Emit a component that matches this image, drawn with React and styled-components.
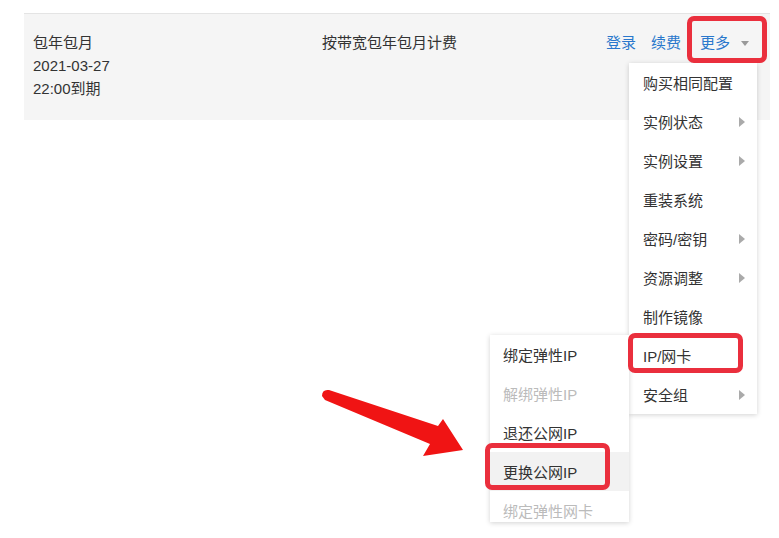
import React from "react";
import styled, { createGlobalStyle } from "styled-components";

const GlobalStyle = createGlobalStyle`
  body {
    margin: 0;
    background: #ffffff;
    font-family: "Liberation Sans", "Noto Sans CJK SC", sans-serif;
    font-size: 15px;
    color: #333333;
  }
`;

const Page = styled.div`
  position: relative;
  width: 779px;
  height: 538px;
  overflow: hidden;
  padding-top: 13px;
  box-sizing: border-box;
`;

const Row = styled.div`
  margin-left: 24px;
  width: 746px;
  height: 107px;
  box-sizing: border-box;
  background: #f5f5f5;
  border-top: 1px solid #e4e4e4;
  display: grid;
  grid-template-columns: 289px 1fr auto;
  align-items: start;
  padding: 17px 21px 0 9px;
  line-height: 23px;
`;

const Cell = styled.div`
  display: flex;
  flex-direction: column;
`;

const Actions = styled.div`
  display: flex;
  align-items: center;
  gap: 15px;
`;

const Link = styled.span`
  color: #2a78cc;
  cursor: pointer;
`;

const More = styled.span`
  display: flex;
  align-items: center;
  gap: 11px;
  margin-left: 4px;
  color: #2a78cc;
`;

const Caret = styled.span`
  width: 0;
  height: 0;
  border-left: 4px solid transparent;
  border-right: 4px solid transparent;
  border-top: 5px solid #999999;
  margin-top: 2px;
`;

const Menu = styled.ul`
  position: absolute;
  list-style: none;
  margin: 0;
  padding: 0;
  background: #ffffff;
  box-shadow: 0 1px 5px rgba(0, 0, 0, 0.18);
  top: ${(p) => p.$top}px;
  left: ${(p) => p.$left}px;
  width: ${(p) => p.$width}px;
  ${(p) => (p.$height ? `height: ${p.$height}px; overflow: hidden;` : "")}
`;

const Item = styled.li`
  position: relative;
  height: 39px;
  display: flex;
  align-items: center;
  justify-content: space-between;
  padding: 0 12px 0 ${(p) => p.$pad || 14}px;
  color: ${(p) => (p.$disabled ? "#bbbbbb" : "#333333")};
  background: ${(p) => (p.$hover ? "#f2f2f2" : "transparent")};
  white-space: nowrap;
`;

const SideArrow = styled.span`
  width: 0;
  height: 0;
  border-top: 5px solid transparent;
  border-bottom: 5px solid transparent;
  border-left: 6px solid #aaaaaa;
`;

const Highlight = styled.div`
  position: absolute;
  box-sizing: border-box;
  border: 5px solid #ea2f3d;
  border-radius: 7px;
  pointer-events: none;
  top: ${(p) => p.$top}px;
  left: ${(p) => p.$left}px;
  width: ${(p) => p.$w}px;
  height: ${(p) => p.$h}px;
`;

const ArrowSvg = styled.svg`
  position: absolute;
  left: 0;
  top: 0;
  pointer-events: none;
`;

const mainItems = [
  { label: "购买相同配置" },
  { label: "实例状态", sub: true },
  { label: "实例设置", sub: true },
  { label: "重装系统" },
  { label: "密码/密钥", sub: true },
  { label: "资源调整", sub: true },
  { label: "制作镜像" },
  { label: "IP/网卡" },
  { label: "安全组", sub: true },
];

const ipItems = [
  { label: "绑定弹性IP" },
  { label: "解绑弹性IP", disabled: true },
  { label: "退还公网IP" },
  { label: "更换公网IP", hover: true },
  { label: "绑定弹性网卡", disabled: true },
];

export default function App() {
  return (
    <>
      <GlobalStyle />
      <Page>
        <Row>
          <Cell>
            <span>包年包月</span>
            <span>2021-03-27</span>
            <span>22:00到期</span>
          </Cell>
          <Cell>
            <span>按带宽包年包月计费</span>
          </Cell>
          <Actions>
            <Link>登录</Link>
            <Link>续费</Link>
            <More>
              更多
              <Caret />
            </More>
          </Actions>
        </Row>

        <Menu $top={63} $left={629} $width={128}>
          {mainItems.map((it) => (
            <Item key={it.label}>
              {it.label}
              {it.sub && <SideArrow />}
            </Item>
          ))}
        </Menu>

        <Menu $top={335} $left={490} $width={139} $height={187}>
          {ipItems.map((it) => (
            <Item
              key={it.label}
              $pad={13}
              $disabled={it.disabled}
              $hover={it.hover}
            >
              {it.label}
            </Item>
          ))}
        </Menu>

        <Highlight $top={16} $left={687} $w={80} $h={47} />
        <Highlight $top={333} $left={628} $w={115} $h={40} />
        <Highlight $top={443} $left={485} $w={125} $h={47} />

        <ArrowSvg width="779" height="538" viewBox="0 0 779 538">
          <path
            d="M322 396 Q322 389 329 390 L438 426 L443 419 L463 450 L423 456 L430 444 L325 400 Z"
            fill="#f01414"
          />
        </ArrowSvg>
      </Page>
    </>
  );
}
